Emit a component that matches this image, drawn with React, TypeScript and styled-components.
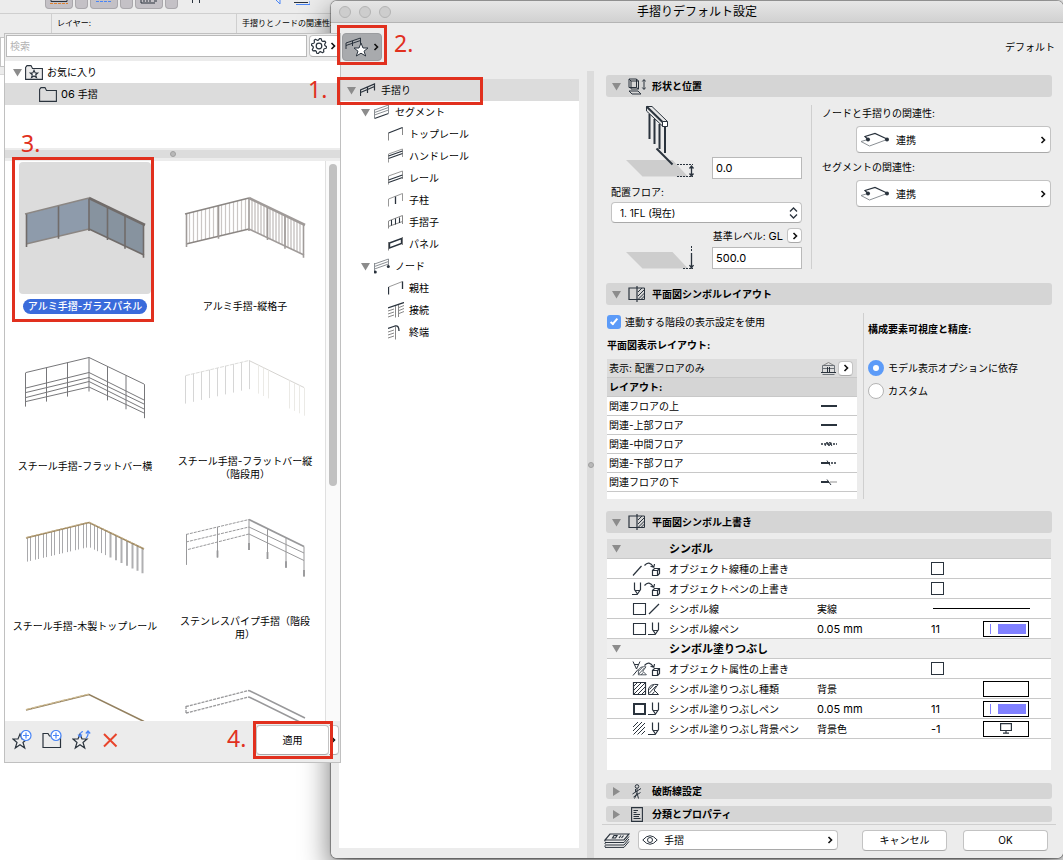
import React, { useState } from "react";
import styled, { createGlobalStyle } from "styled-components";

const INK = "#2a333d";
const RED = "#e1301e";
const BLUE = "#4a86f7";

const GlobalStyle = createGlobalStyle`
  *, *::before, *::after { box-sizing: border-box; }
  body {
    margin: 0;
    background: #fff;
    color: #000;
    font: 10px/14px Inter, "Noto Sans CJK JP", sans-serif;
  }
  button, input, select { font: inherit; color: inherit; margin: 0; padding: 0; }
  svg { display: block; flex: none; }
  h1, h2, h3, p, ul { margin: 0; padding: 0; font: inherit; }
  ul { list-style: none; }
`;

const Desktop = styled.main`
  position: relative;
  min-height: 100vh;
  overflow: hidden;
`;

/* ---------- main application window behind the dialog ---------- */

const AppBackdrop = styled.div`
  position: absolute;
  inset: 0 0 auto 0;
  background: #ececec;
`;

const AppToolbar = styled.div`
  display: flex;
  height: 14px;
  padding-left: 45px;
  border-bottom: 1px solid #cfcfcf;
`;

const ToolChip = styled.div<{ $wide?: boolean }>`
  display: flex;
  justify-content: center;
  width: ${(p) => (p.$wide ? 28 : 13)}px;
  height: 9px;
  margin-right: 2px;
  border: 1px solid #aaa8ac;
  border-top: 0;
  border-radius: 0 0 4px 4px;
  background: #c4c1c6;
`;

const LooseIcons = styled.div`
  display: flex;
  gap: 76px;
  padding-left: 12px;
`;

const InfoBar = styled.div`
  display: flex;
  height: 20px;
  font-size: 8px;
  line-height: 18px;
  white-space: nowrap;
`;

const InfoCell = styled.div<{ $width: number }>`
  width: ${(p) => p.$width}px;
  padding-left: 5px;
  border-right: 1px solid #cfcfcf;
`;

const InfoBody = styled.div`
  height: 41px;
  padding-top: 3px;
  border-bottom: 1px solid #d8d8d8;
`;

const InfoField = styled.div`
  height: 30px;
  border: 1px solid #c4c4c4;
  background: #fff;
`;

/* ---------- dialog ---------- */

const Dialog = styled.section`
  position: relative;
  display: flex;
  flex-direction: column;
  min-height: calc(100vh - 3px);
  margin: 1px 0 2px 331px;
  overflow: clip;
  border-radius: 6px;
  background: #ececec;
`;

const DialogShadow = styled.div`
  position: absolute;
  inset: 1px 0 2px 331px;
  border-radius: 6px;
  box-shadow: 0 12px 28px 2px rgba(0, 0, 0, 0.5), 0 0 1px 1px rgba(0, 0, 0, 0.35);
`;

const TitleBar = styled.header`
  display: grid;
  grid-template-columns: 1fr auto 1fr;
  align-items: center;
  height: 22px;
  padding: 0 8px;
  border-bottom: 1px solid #b4b4b4;
  background: linear-gradient(#e6e6e6, #d1d1d1);
`;

const Lights = styled.div`
  display: flex;
  gap: 8px;
`;

const Light = styled.span`
  width: 12px;
  height: 12px;
  border: 1px solid #b3b3b3;
  border-radius: 50%;
  background: #cdcdcd;
`;

const Title = styled.h1`
  font-size: 12px;
`;

const DialogTools = styled.div`
  display: flex;
  align-items: center;
  justify-content: space-between;
  height: 48px;
  padding: 0 8px 0 11px;
`;

const FavoriteButton = styled.button`
  display: flex;
  align-items: center;
  justify-content: center;
  gap: 3px;
  width: 40px;
  height: 28px;
  border: 1px solid #9b9da0;
  border-radius: 4px;
  background: #a8aaad;
`;

const DialogBody = styled.div`
  display: flex;
  flex: 1;
`;

const Tree = styled.ul`
  width: 240px;
  margin: 8px 8px 10px;
  background: #fff;
`;

const TreeRow = styled.li<{ $level: number; $selected?: boolean }>`
  display: flex;
  align-items: center;
  gap: 5px;
  height: 22px;
  padding-left: ${(p) => 8 + p.$level * 14}px;
  background: ${(p) => (p.$selected ? "#dcdcdc" : "transparent")};
`;

const TriSlot = styled.span`
  width: 8px;
`;

const Splitter = styled.div<{ $horizontal?: boolean }>`
  display: flex;
  align-items: center;
  justify-content: center;
  flex: none;
  background: #dcdcdc;
  ${(p) => (p.$horizontal ? "height: 8px; margin: 2px 0 3px;" : "width: 7px;")}
`;

const Grip = styled.span`
  flex: none;
  width: 6px;
  height: 6px;
  border: 1px solid #a0a0a0;
  border-radius: 50%;
  background: #b8b8b8;
`;

const Settings = styled.div`
  display: flex;
  flex: 1;
  flex-direction: column;
  min-width: 0;
`;

const Panels = styled.div`
  flex: 1;
  padding: 4px 11px 2px 12px;
`;

const PanelHead = styled.h2<{ $slim?: boolean }>`
  display: flex;
  align-items: center;
  height: ${(p) => (p.$slim ? 16 : 22)}px;
  padding-left: 6px;
  margin-bottom: ${(p) => (p.$slim ? 7 : 0)}px;
  border-radius: 3px;
  background: #d5d5d5;
  font-weight: 700;
  &:last-child { margin-bottom: 0; }
`;

const HeadIcon = styled.span`
  display: flex;
  justify-content: center;
  width: 20px;
  margin: 0 5px 0 6px;
`;

const PositionBody = styled.div`
  display: grid;
  grid-template-columns: 206px 1fr;
  padding: 8px 0 14px;
`;

const PositionLeft = styled.div`
  padding: 0 9px 0 5px;
  border-right: 1px solid #cfcfcf;
`;

const PictureRow = styled.div`
  display: flex;
  align-items: flex-end;
  justify-content: space-between;
  padding-left: 15px;
`;

const NumberInput = styled.input`
  width: 90px;
  height: 22px;
  padding: 0 3px;
  border: 1px solid #b9b9b9;
  background: #fff;
  font-size: 11px;
`;

const FloorLabel = styled.label`
  display: block;
  margin: 6px 0 3px;
`;

const SelectWrap = styled.div`
  display: grid;
  align-items: center;
  > * { grid-area: 1 / 1; }
  > svg { justify-self: end; margin-right: 4px; pointer-events: none; }
`;

const control = `
  border: 1px solid #c3c3c3;
  border-bottom-color: #a9a9a9;
  border-radius: 4px;
  background: #fff;
`;

const FloorSelect = styled.select`
  ${control}
  appearance: none;
  height: 21px;
  padding: 0 8px;
`;

const BaseRow = styled.div`
  display: flex;
  align-items: center;
  justify-content: flex-end;
  gap: 4px;
  height: 15px;
  margin: 5px 0 3px;
`;

const RoundButton = styled.button`
  ${control}
  display: flex;
  align-items: center;
  justify-content: center;
  width: 15px;
  height: 15px;
`;

const PositionRight = styled.div`
  padding: 1px 1px 0 10px;
`;

const LinkButton = styled.button`
  ${control}
  display: flex;
  align-items: center;
  gap: 7px;
  width: calc(100% - 34px);
  height: 27px;
  margin: 6px 0 7px 34px;
  padding: 0 4px 0 3px;
  text-align: left;
  > svg:last-child { margin-left: auto; }
`;

const LayoutBody = styled.div`
  display: grid;
  grid-template-columns: 258px 1fr;
  padding: 8px 0 12px;
`;

const LayoutLeft = styled.div`
  padding: 2px 6px 0 1px;
  border-right: 1px solid #cfcfcf;
`;

const LayoutRight = styled.div`
  padding: 9px 0 0 4px;
`;

const SubHead = styled.h3<{ $bottom: number }>`
  margin-bottom: ${(p) => p.$bottom}px;
  font-weight: 700;
`;

const CheckLabel = styled.label`
  display: flex;
  align-items: center;
  gap: 4px;
  margin-bottom: 9px;
`;

const BlueCheck = styled.input`
  appearance: none;
  width: 14px;
  height: 14px;
  border-radius: 3px;
  background: #5c9bf8;
  display: grid;
  place-items: center;
  &:checked::after {
    content: "";
    width: 4px;
    height: 8px;
    margin-bottom: 2px;
    border: solid #fff;
    border-width: 0 2px 2px 0;
    transform: rotate(40deg);
  }
`;

const RadioLabel = styled.label`
  display: flex;
  align-items: center;
  gap: 4px;
  margin-bottom: 7px;
`;

const Radio = styled.input`
  appearance: none;
  width: 16px;
  height: 16px;
  border: 1px solid #b4b4b4;
  border-radius: 50%;
  background: #fff;
  &:checked { border: 5px solid #5c9bf8; }
`;

const FloorTable = styled.table`
  width: 100%;
  height: 140px;
  border-spacing: 0;
  background: #fff;
  td, th {
    height: 19px;
    padding: 0 0 0 2px;
    border-bottom: 1px solid #c8c8c8;
    text-align: left;
    font-weight: inherit;
  }
  td:last-child { width: 36px; padding: 0; }
  tr:last-child td { height: 7px; border: 0; }
`;

const FloorHeadRow = styled.tr<{ $bold?: boolean }>`
  background: ${(p) => (p.$bold ? "#d5d5d5" : "#dcdcdc")};
  font-weight: ${(p) => (p.$bold ? 700 : 400)};
`;

const FloorTools = styled.div`
  display: flex;
  align-items: center;
  gap: 2px;
`;

const OverrideFrame = styled.div`
  min-height: 231px;
  margin: 6px 1px 13px;
  background: #fff;
`;

const OverrideTable = styled.table`
  width: 100%;
  table-layout: fixed;
  border-spacing: 0;
  td, th {
    height: 20px;
    padding: 0;
    border-bottom: 1px solid #c8c8c8;
    text-align: left;
    white-space: nowrap;
    font-weight: inherit;
  }
`;

const GroupRow = styled.tr<{ $light?: boolean }>`
  background: ${(p) => (p.$light ? "#f0f0f0" : "#dcdcdc")};
  font-size: 11px;
  font-weight: 700;
  td { padding-left: 5px; }
`;

const Figure = styled.span`
  font-size: 11px;
`;

const SquareCheck = styled.input`
  appearance: none;
  display: block;
  width: 13px;
  height: 13px;
  border: 1px solid ${INK};
  background: #fff;
`;

const Swatch = styled.button`
  display: flex;
  align-items: center;
  justify-content: center;
  width: 46px;
  height: 16px;
  border: 1px solid #000;
  background: #fff;
`;

const PenBars = styled.span`
  display: flex;
  justify-content: space-between;
  width: 100%;
  height: 10px;
  padding: 0 2px 0 6px;
  &::before { content: ""; width: 1px; background: #8080ff; }
  &::after { content: ""; width: 28px; background: #8080ff; }
`;

const DialogFoot = styled.footer`
  display: flex;
  align-items: center;
  height: 34px;
  margin: 0 7px 0 8px;
  padding: 0 8px 3px 2px;
  border-top: 1px solid #cfcfcf;
`;

const LayerButton = styled.button`
  ${control}
  display: flex;
  flex: 0 1 200px;
  align-items: center;
  gap: 6px;
  height: 20px;
  margin: 0 auto 0 8px;
  padding: 0 4px 0 3px;
  > svg:last-child { margin-left: auto; }
`;

const PushButton = styled.button`
  ${control}
  width: 85px;
  height: 21px;
  margin-left: 16px;
`;

/* ---------- favourites popover ---------- */

const Popover = styled.aside`
  position: absolute;
  top: 33px;
  left: 4px;
  display: flex;
  flex-direction: column;
  width: 337px;
  border: 1px solid #c0c0c0;
  background: #ececec;
`;

const SearchRow = styled.div`
  display: flex;
  gap: 2px;
  padding: 1px 1px 4px 1px;
`;

const SearchInput = styled.input`
  flex: 1;
  min-width: 0;
  height: 22px;
  padding: 0 3px;
  border: 1px solid #b9b9b9;
  background: #fff;
  &::placeholder { color: #b4b4b4; opacity: 1; }
`;

const GearButton = styled.button`
  ${control}
  display: flex;
  align-items: center;
  gap: 3px;
  width: 30px;
  height: 22px;
  padding-left: 1px;
  border-right: 0;
  border-radius: 4px 0 0 4px;
`;

const FolderList = styled.ul`
  height: 87px;
  background: #fff;
`;

const FolderRow = styled.li<{ $nested?: boolean }>`
  display: flex;
  align-items: center;
  gap: 3px;
  height: 22px;
  padding-left: ${(p) => (p.$nested ? 34 : 8)}px;
  background: ${(p) => (p.$nested ? "#dcdcdc" : "transparent")};
`;

const FolderName = styled.span`
  margin-left: 1px;
`;

const Browser = styled.div`
  display: flex;
  height: 560px;
  overflow: hidden;
  background: #fff;
`;

const Gallery = styled.div`
  display: grid;
  flex: 1;
  grid-template-columns: repeat(2, 160px);
  grid-auto-rows: 160px;
  padding-top: 1px;
`;

const Card = styled.figure`
  display: flex;
  flex-direction: column;
  align-items: center;
  margin: 0;
  padding-bottom: 3px;
`;

const Thumb = styled.div<{ $selected?: boolean }>`
  width: 132px;
  height: 132px;
  border-radius: 4px;
  background: ${(p) => (p.$selected ? "#dcdcdc" : "transparent")};
`;

const Caption = styled.figcaption<{ $selected?: boolean }>`
  margin: auto 0;
  padding: 1px 5px;
  border-radius: 8px;
  background: ${(p) => (p.$selected ? "#3a6bdb" : "transparent")};
  color: ${(p) => (p.$selected ? "#fff" : "#000")};
  font-weight: ${(p) => (p.$selected ? 500 : 400)};
  line-height: 13px;
  text-align: center;
  white-space: nowrap;
`;

const ScrollTrack = styled.div`
  width: 15px;
  padding: 3px 2px 0 3px;
  border-left: 1px solid #e0e0e0;
  background: #fafafa;
`;

const ScrollThumb = styled.div`
  width: 8px;
  height: 322px;
  border-radius: 4px;
  background: #c1c1c1;
`;

const PopoverFoot = styled.div`
  display: flex;
  align-items: center;
  gap: 10px;
  height: 41px;
  padding: 0 1px 3px 7px;
`;

const IconButton = styled.button`
  display: flex;
  border: 0;
  background: none;
`;

const ApplyGroup = styled.div`
  display: flex;
  margin-left: auto;
`;

const ApplyButton = styled.button`
  ${control}
  width: 73px;
  height: 30px;
`;

const ApplyMenu = styled.button`
  ${control}
  display: flex;
  align-items: center;
  justify-content: flex-end;
  width: 10px;
  height: 30px;
  padding-right: 2px;
  border-left: 0;
  border-radius: 0 4px 4px 0;
`;

/* ---------- tutorial marks ---------- */

const Mark = styled.div<{ $x: number; $y: number; $w: number; $h: number }>`
  position: absolute;
  left: ${(p) => p.$x}px;
  top: ${(p) => p.$y}px;
  width: ${(p) => p.$w}px;
  height: ${(p) => p.$h}px;
  border: 3px solid ${RED};
  pointer-events: none;
`;

const Step = styled.div<{ $x: number; $y: number }>`
  position: absolute;
  left: ${(p) => p.$x}px;
  top: ${(p) => p.$y}px;
  color: ${RED};
  font: 23px/24px "Noto Sans", sans-serif;
`;

/* ---------- icons ---------- */

type LineProps = { w: number; h: number; children: React.ReactNode; color?: string; sw?: number };

const Ico = ({ w, h, children, color = INK, sw = 1 }: LineProps) => (
  <svg width={w} height={h} viewBox={`0 0 ${w} ${h}`} fill="none" stroke={color} strokeWidth={sw} aria-hidden="true">
    {children}
  </svg>
);

const Triangle = ({ closed }: { closed?: boolean }) => (
  <svg width="9" height="9" viewBox="0 0 9 9" fill="#8c8c8c" aria-hidden="true">
    <path d={closed ? "M1 0L8 4.500L1 9Z" : "M0 1H9L4.500 8.500Z"} />
  </svg>
);

const Chevron = () => (
  <Ico w={6} h={8} sw={1.6} color="#111"><path d="M1.500 1L4.500 4L1.500 7" /></Ico>
);

const Gear = () => {
  const pts: string[] = [];
  for (let i = 0; i < 32; i++) {
    const r = i % 4 < 2 ? 7.6 : 5.9;
    const a = ((i + 0.5) / 32) * Math.PI * 2;
    pts.push(`${(8 + r * Math.cos(a)).toFixed(2)},${(8 + r * Math.sin(a)).toFixed(2)}`);
  }
  return (
    <Ico w={16} h={16} sw={1.2}>
      <polygon points={pts.join(" ")} strokeLinejoin="round" />
      <circle cx="8" cy="8" r="2.800" />
    </Ico>
  );
};

const FolderIcon = ({ star }: { star?: boolean }) => (
  <Ico w={18} h={15} sw={1.1}>
    <path d="M.6 14.400V2.500L2 .6H6L7.500 3.500H17.400V14.400Z" fill={star ? "#ececec" : "none"} />
    {star && <path d="M9 5.300L10.200 8H12.700L10.700 9.800L11.500 12.500L9 11L6.500 12.500L7.300 9.800L5.300 8H7.800Z" fill="#fff" />}
  </Ico>
);

const treeIcons: Record<string, React.ReactNode> = {
  railing: <path d="M.5 14V8L14.500 2V8.500M.5 10.500L14.500 4.500M7.500 5V11" strokeWidth="1.200" />,
  segment: (
    <>
      <path d="M.5 6L14.500 1M.5 8.500L14.500 3.500M.5 11L14.500 6M.5 5.500V14M14.500 .5V9" stroke="#8a8f94" />
      <path d="M.5 14.500L14.500 9.500" strokeWidth="1.200" />
    </>
  ),
  top: (<><path d="M.5 14.500V7M14.500 1.500V9" stroke="#888" /><path d="M.5 7L14.500 1.500" strokeWidth="1.300" /></>),
  hand: (<><path d="M.5 14.500V6L14.500 1V9" stroke="#999" /><path d="M.5 8L14.500 3M.5 10.500L14.500 5.500" strokeWidth="1.200" /></>),
  rail: (<><path d="M.5 14.500V6L14.500 1V9" stroke="#999" /><path d="M.5 10L14.500 5M.5 12.500L14.500 7.500" strokeWidth="1.200" /></>),
  post: (<><path d="M.5 14.500V7L14.500 1.500V9" stroke="#999" /><path d="M7.500 4.500V12" strokeWidth="1.300" /></>),
  baluster: (<><path d="M.5 14.500V7L14.500 1.500V10M.5 12.500L14.500 7.500" stroke="#888" /><path d="M3.500 6V11.500M7.500 4.500V10.500M11.500 3.500V9" strokeWidth="1.100" /></>),
  panel: (<><path d="M.5 14.500V6M14.500 1V9" stroke="#888" /><path d="M1.500 7L13.500 2.500V7.500L1.500 12Z" strokeWidth="1.400" /></>),
  node: (
    <>
      <path d="M.5 6L14.500 1M.5 8.500L14.500 3.500M.5 11L14.500 6M.5 5V14M14.500 1V9" stroke="#8a8f94" />
      <circle cx="1.300" cy="14" r="1.500" fill={INK} stroke="none" />
      <circle cx="14.300" cy="8.500" r="1.500" fill={INK} stroke="none" />
    </>
  ),
  newel: (<><path d="M.5 7L14.500 1.500" stroke="#999" /><path d="M.5 14.500V7M14.500 1.500V9" strokeWidth="1.300" /></>),
  joint: (
    <>
      <path d="M0 6L16 .5" strokeWidth="1.300" />
      <path d="M0 9L6 7M0 12L6 10M0 15L6 13M11 5.500L16 3.500M11 8.500L16 6.500M11 11.500L16 9.500M7.500 4V15.500M10.500 3V15" stroke="#888" />
    </>
  ),
  end: (
    <>
      <path d="M0 4.500L7 2Q11 1 11 7" strokeWidth="1.300" />
      <path d="M0 8L6 6M0 11L6 9M0 14L6 12M7.500 3V15.500" stroke="#888" />
    </>
  ),
};

const RailingStar = () => (
  <Ico w={25} h={20}>
    <path d="M1 12V6L15.500 1V7M1 8.500L15.500 3.500M7.500 4V9" />
    <path d="M16 6L18 11H23L19 14.200L20.700 19L16 16.200L11.300 19L13 14.200L9 11H14Z" fill="#fff" />
  </Ico>
);

const PositionIcon = () => (
  <Ico w={18} h={17}>
    <path d="M1 1H8.500V9.500H1ZM1 1L3 3V11H10.500V3L8.500 1M8.500 9.500L10.500 11M3 3H10.500M1 13H10L13 16H4Z" />
    <path d="M16 2V11M14.300 3.500L16 1.500L17.700 3.500M14.300 9.500L16 11.500L17.700 9.500" />
  </Ico>
);

const PlanIcon = () => (
  <Ico w={18} h={16} sw={1.200}>
    <path d="M8.500 2H1V13.500H8.500M9 0V16" />
    <path d="M9 2H16.500V13.500H9M10 6L14 2M10 10L16.500 3.500M10 13.500L16.500 7M13 13.500L16.500 10" strokeWidth="1" />
  </Ico>
);

const BreakIcon = () => (
  <Ico w={10} h={15}>
    <circle cx="5" cy="2.500" r="1.800" />
    <path d="M5 4.500V9L2.500 14.500M5 9L6.500 14.500M.5 10L9 4.500M1.500 13L8.500 8.500M3.500 5V8" />
  </Ico>
);

const DocIcon = () => (
  <Ico w={12} h={15} sw={1.100}>
    <path d="M.6 .6H11.400V14.400H.6ZM2.500 3.500H7M2.500 5.500H5.500M2.500 7.500H9M2.500 9.500H8M2.500 11.500H9.500" />
  </Ico>
);

const LinkIcon = () => (
  <Ico w={29} h={15}>
    <path d="M8 7.500L5 4.500L15 1.500L27 7" strokeWidth="1.200" />
    <path d="M8 7.500L1 9.500L9.500 14L27 7.500" stroke="#8a8f94" />
    <circle cx="8" cy="7.500" r="2" fill={INK} stroke="none" />
    <circle cx="27" cy="7.500" r="2" fill={INK} stroke="none" />
  </Ico>
);

const HeightPicture = () => (
  <Ico w={70} h={74}>
    <path d="M0 55H46.500L62 71.500H16.500Z" fill="#cdcdcd" stroke="none" />
    <path d="M51 59.500H67M51 71.500H67" strokeDasharray="2 1" />
    <path d="M65.500 61V71M63.500 63.500L65.500 61L67.500 63.500M63.500 68.500L65.500 71L67.500 68.500" strokeWidth="1.300" />
    <path d="M23.500 9V34M28.500 14V39M33.500 19V44M39 21V48" strokeWidth="2" />
    <path d="M30.500 43.500L46.500 59.500" strokeWidth="2" />
    <path d="M20.500 1.500H26L41 16V21H36.500L20.500 6Z" fill="#e8e8e8" />
    <path d="M20.500 1.500L36.500 17" strokeWidth="2" />
    <path d="M36.500 16.500H41.500V21.500H36.500Z" fill="#fff" />
  </Ico>
);

const LevelPicture = () => (
  <Ico w={70} h={23}>
    <path d="M0 6H46.500L62 22.500H16.500Z" fill="#cdcdcd" stroke="none" />
    <path d="M57 22.500H67" strokeDasharray="2 1" />
    <path d="M65.500 0V6" strokeDasharray="2 1" />
    <path d="M65.500 7V22M63.500 19L65.500 22L67.500 19" strokeWidth="1.300" />
  </Ico>
);

const StoryIcon = () => (
  <Ico w={15} h={15}>
    <path d="M2 4.500L7.500 1.500L13 4.500" stroke="#888" />
    <path d="M1.500 4.500H13.500V11M1.500 4.500V11M1.500 7.500H13.500M1.500 13.500H13.500" stroke="#6d7379" />
    <path d="M0 11.500H15M6.500 6V11M8.500 6V11" />
  </Ico>
);

const StackIcon = () => (
  <Ico w={26} h={15}>
    <path d="M6 1H25L20 7H1ZM8.500 5L10 2.500H13L11.500 5ZM15 5L17 2.500M17.500 5L19.500 2.500" strokeWidth="1.200" />
    <path d="M1 9.500H20L25 3.500M1 12H20L25 6M1 14.400H20L25 8.500M1 7V8.500M1 10V11M1 12.500V14" />
  </Ico>
);

const EyeIcon = () => (
  <Ico w={16} h={10}>
    <path d="M.8 5Q8 -3.500 15.200 5Q8 13.500 .8 5Z" />
    <circle cx="8" cy="5" r="2.500" />
  </Ico>
);

const lineMarks: React.ReactNode[] = [
  <path key="0" d="M0 4H16" strokeWidth="2" />,
  <path key="1" d="M0 4H16" strokeWidth="2" />,
  <g key="2"><path d="M0 4H16" strokeWidth="1.500" strokeDasharray="2 1" /><path d="M4 6L6 2L8 6L10 2M8 2L11 6" /></g>,
  <g key="3"><path d="M0 4H9" strokeWidth="2" /><path d="M10 4H16" strokeWidth="1.500" strokeDasharray="2 1" /><path d="M6 1.500L9 6.500" /></g>,
  <g key="4"><path d="M9 4H16" stroke="#c8c8c8" strokeWidth="2" /><path d="M0 4H8" strokeWidth="2" /><path d="M6 1.500L10 7" /></g>,
];

const ObjectArrow = () => (
  <>
    <path d="M12.500 4.500Q17 -1 21.500 6M18.500 5.200L21.800 6.300L22.500 3" strokeWidth="1.200" />
    <path d="M20.500 9.500H25.500V14.500H20.500ZM20.500 9.500L22.500 7.500H27.500V12.500L25.500 14.500M27.500 7.500L25.500 9.500" strokeWidth="1.200" />
  </>
);

const Pen = ({ x }: { x: number }) => (
  <g transform={`translate(${x} 0)`}>
    <path d="M2.500 1.500V8.500L5.500 13L8.500 8.500V1.500M3.500 9.500H7.500" strokeWidth="1.200" />
    <path d="M-2 13.500H5.500" />
  </g>
);

const Hatch = () => <path d="M1 6L6 1M1 10L10 1M1.500 13.500L13 2M5.500 13.500L13 6M9.500 13.500L13 10" />;
const FillSector = ({ x }: { x: number }) => (
  <path transform={`translate(${x} 0)`} d="M.5 13.500V8Q2 2.500 10 3.500L6 9L10.500 13.500ZM1.500 8.500L5.500 4M1 12.500L8 5M4 13.500L6.500 10.500" />
);

const rowIcons: Record<string, React.ReactNode> = {
  objLine: (<><path d="M1 14.500L9.500 5" strokeWidth="1.200" /><ObjectArrow /></>),
  objPen: (<><Pen x={0} /><ObjectArrow /></>),
  line: (<><path d="M1.500 2.500H13.500V13.500H1.500Z" strokeWidth="1.100" /><path d="M17 13L27 3" strokeWidth="1.200" /></>),
  linePen: (<><path d="M1.500 2.500H13.500V13.500H1.500Z" strokeWidth="1.100" /><Pen x={18} /></>),
  objFill: (<><path d="M1 .5L4.500 8L8 .5M2.500 3.500H6.500M1 14.500L6 8.500" /><g transform="translate(6 3) scale(.8)"><FillSector x={0} /></g><ObjectArrow /></>),
  fill: (<><path d="M1.500 1.500H13.500V13.500H1.500Z" strokeWidth="1.200" /><Hatch /><FillSector x={16} /></>),
  fillPen: (<><path d="M2 3H13V13H2Z" strokeWidth="2" /><Pen x={18} /></>),
  backPen: (<><Hatch /><Pen x={18} /></>),
};

const MonitorIcon = () => (
  <Ico w={12} h={11} sw={1.200}><path d="M.6 .6H11.400V7.500H.6ZM6 7.500V10M3 10.200H9" /></Ico>
);

const badge = (
  <g stroke={BLUE}>
    <circle cx="14" cy="5.500" r="5" fill="#fff" />
    <path d="M14 2.500V8.500M11 5.500H17" />
  </g>
);

const FOOT_STAR = "M8 4L10 9H15L11 12.500L12.700 18L8 14.700L3.300 18L5 12.500L1 9H6Z";

/* ---------- railing thumbnails ---------- */

/* height of a line that runs from the left end to the corner and on to the right end */
const at = (x: number, l: number, c: number, r: number) =>
  x <= 70 ? l + ((c - l) * (x - 7)) / 63 : c + ((r - c) * (x - 70)) / 55;

const bend = (l: number, c: number, r: number) => `M7 ${l}L70 ${c}L125 ${r}`;
const posts = (xs: number[], t: number[], b: number[]) =>
  xs.map((x) => `M${x} ${at(x, t[0], t[1], t[2]).toFixed(1)}V${at(x, b[0], b[1], b[2]).toFixed(1)}`).join("");
const span = (from: number, to: number, step: number) => {
  const out: number[] = [];
  for (let x = from; x <= to; x += step) out.push(x);
  return out;
};

const MAIN = [7.5, 39.5, 70, 88.5, 106, 124.5];

const frame = (
  <>
    <path d="M7 82L70 67" stroke="#8b8683" strokeWidth="1.300" />
    <path d="M70 67L125 93" strokeWidth="1.600" />
    <path d={posts(MAIN, [52, 36, 63], [85, 69, 96])} strokeWidth="1.600" />
    <path d="M6 52L70 36" stroke="#8b8683" strokeWidth="1.600" />
    <path d="M70 36L126 63" strokeWidth="2.500" />
  </>
);

const thumbs: React.ReactNode[] = [
  <g key="glass" stroke="#716c6a">
    <path d="M7 52L70 36V67L7 82Z" fill="#8e9bab" stroke="none" />
    <path d="M70 36L125 63V93L70 67Z" fill="#87939f" stroke="none" />
    {frame}
  </g>,
  <g key="bars" stroke="#a09b99">
    <path d={posts(span(10.5, 68, 4), [52, 36, 63], [82, 67, 93])} stroke="#cbc7c5" strokeWidth="1.200" />
    <path d={posts(span(73, 123, 3), [52, 36, 63], [82, 67, 93])} stroke="#cbc8c6" strokeWidth="1.500" />
    {frame}
  </g>,
  <g key="flat" stroke="#77777a">
    <path d={[bend(50.5, 35.5, 62), bend(66, 50.5, 78), bend(70.5, 55.5, 82), bend(75.5, 59.5, 87), bend(79.5, 65, 91)].join("")} />
    <path d={posts([6.5, 27.5, 48.5, 70, 88.5, 107, 125.5], [50.5, 35.5, 62], [84.5, 69.5, 96])} />
  </g>,
  <g key="stair" stroke="#dcdcda">
    <path d="M7 53.500L70 38.500" strokeDasharray="4 1" />
    <path d="M70 38.500L125 65.500" stroke="#d6d4d1" />
    <path d={posts([6.5, 14.5, 22.5, 30.5, 38.5, 46.5, 54.5, 62.5, 70.5], [53.5, 38.5, 65.5], [81.5, 67, 93.5])} stroke="#d6d6d6" />
    <path d={posts([79.5, 84.5, 89.5, 110.5, 115.5, 120.5, 125.5], [53.5, 38.5, 65.5], [81.5, 67, 93.5])} stroke="#ebeae6" />
  </g>,
  <g key="wood" stroke="#a9a9ac">
    <path d={posts([8.5, 11.5, 16.5, 19.5, 24.5, 27.5, 32.5, 35.5, 40.5, 43.5, 48.5, 51.5, 56.5, 59.5, 64.5, 67.5, 71.5, 75.5, 78.5, 82.5, 86.5], [56, 40.5, 67], [80, 65, 92])} />
    <path d={posts([91.5, 97, 102.5, 108, 113.5, 118.5, 123.5], [56, 40.5, 67], [80, 65, 92])} stroke="#b0b0b2" strokeWidth="2" />
    <path d={bend(56, 40.5, 67)} stroke="#9c8660" strokeWidth="1.500" />
    <path d={bend(55.5, 40, 66.5)} stroke="#c9b58d" strokeDasharray="3 2" />
  </g>,
  <g key="pipe" stroke="#98989a">
    <path d="M7 52.500L70 37.500M7 60L70 45M9 67.500L70 52" strokeDasharray="3 1" />
    <path d="M70 45L125 71M70 52L125 78.500" />
    <path d="M70 37.500L125 64.500" strokeWidth="1.800" />
    <path d={posts([7.5, 38.5, 70, 88.5, 107, 125], [52.5, 37.5, 64.5], [83, 68, 94.5])} />
    <path d={posts([38.5, 70, 88.5, 107, 125], [76, 61, 88], [83, 68, 94.5])} strokeWidth="1.800" />
  </g>,
  <g key="woodRail">
    <path d={bend(68, 52.5, 79.5)} stroke="#93805f" strokeWidth="1.600" />
    <path d="M7 67.500L70 52" stroke="#d0bd94" strokeWidth="1.200" strokeDasharray="5 1" />
  </g>,
  <g key="doubleRail" stroke="#98989a">
    <path d="M7 64.500L70 48.500M7 71L70 55M7 64V72" strokeDasharray="3 1" strokeWidth="1.300" />
    <path d="M70 48.500L126 76M70 55L126 82.500" strokeWidth="1.600" />
  </g>,
];

/* ---------- data ---------- */

const favorites: string[][] = [
  ["アルミ手摺-ガラスパネル"],
  ["アルミ手摺-縦格子"],
  ["スチール手摺-フラットバー横"],
  ["スチール手摺-フラットバー縦", "（階段用）"],
  ["スチール手摺-木製トップレール"],
  ["ステンレスパイプ手摺（階段", "用）"],
  [],
  [],
];

const tree: { level: number; icon: string; label: string }[] = [
  { level: 0, icon: "railing", label: "手摺り" },
  { level: 1, icon: "segment", label: "セグメント" },
  { level: 2, icon: "top", label: "トップレール" },
  { level: 2, icon: "hand", label: "ハンドレール" },
  { level: 2, icon: "rail", label: "レール" },
  { level: 2, icon: "post", label: "子柱" },
  { level: 2, icon: "baluster", label: "手摺子" },
  { level: 2, icon: "panel", label: "パネル" },
  { level: 1, icon: "node", label: "ノード" },
  { level: 2, icon: "newel", label: "親柱" },
  { level: 2, icon: "joint", label: "接続" },
  { level: 2, icon: "end", label: "終端" },
];

const floors = ["関連フロアの上", "関連-上部フロア", "関連-中間フロア", "関連-下部フロア", "関連フロアの下"];

type Override = { icon: string; label: string; value?: string; num?: string; kind: "check" | "line" | "pen" | "blank" | "screen" };

const symbolRows: Override[] = [
  { icon: "objLine", label: "オブジェクト線種の上書き", kind: "check" },
  { icon: "objPen", label: "オブジェクトペンの上書き", kind: "check" },
  { icon: "line", label: "シンボル線", value: "実線", kind: "line" },
  { icon: "linePen", label: "シンボル線ペン", value: "0.05 mm", num: "11", kind: "pen" },
];

const fillRows: Override[] = [
  { icon: "objFill", label: "オブジェクト属性の上書き", kind: "check" },
  { icon: "fill", label: "シンボル塗りつぶし種類", value: "背景", kind: "blank" },
  { icon: "fillPen", label: "シンボル塗りつぶしペン", value: "0.05 mm", num: "11", kind: "pen" },
  { icon: "backPen", label: "シンボル塗りつぶし背景ペン", value: "背景色", num: "-1", kind: "screen" },
];

/* ---------- parts ---------- */

const OverrideRow = ({ row }: { row: Override }) => (
  <tr>
    <td />
    <td><Ico w={30} h={16}>{rowIcons[row.icon]}</Ico></td>
    <td>{row.label}</td>
    <td>{row.value && /^\d/.test(row.value) ? <Figure>{row.value}</Figure> : row.value}</td>
    {row.kind === "line" ? (
      <td colSpan={2}><Ico w={99} h={2} color="#000"><path d="M2 .5H99" /></Ico></td>
    ) : (
      <>
        <td>{row.kind === "check" ? <SquareCheck type="checkbox" aria-label={row.label} /> : <Figure>{row.num}</Figure>}</td>
        <td>
          {row.kind !== "check" && (
            <Swatch aria-label={row.label}>
              {row.kind === "pen" && <PenBars />}
              {row.kind === "screen" && <MonitorIcon />}
            </Swatch>
          )}
        </td>
      </>
    )}
  </tr>
);

const SectionHead = ({ icon, title, closed }: { icon: React.ReactNode; title: string; closed?: boolean }) => (
  <PanelHead $slim={closed}>
    <Triangle closed={closed} />
    <HeadIcon>{icon}</HeadIcon>
    {title}
  </PanelHead>
);

const FavoritesPopover = () => (
  <Popover>
    <SearchRow>
      <SearchInput type="text" placeholder="検索" aria-label="検索" />
      <GearButton aria-label="設定"><Gear /><Chevron /></GearButton>
    </SearchRow>
    <FolderList>
      <FolderRow><Triangle /><FolderIcon star /><FolderName>お気に入り</FolderName></FolderRow>
      <FolderRow $nested><FolderIcon /><FolderName><Figure>06 </Figure>手摺</FolderName></FolderRow>
    </FolderList>
    <Splitter $horizontal><Grip /></Splitter>
    <Browser>
      <Gallery>
        {favorites.map((lines, i) => (
          <Card key={i}>
            <Thumb $selected={i === 0}>
              <svg width="132" height="132" viewBox="0 0 132 132" fill="none" aria-hidden="true">{thumbs[i]}</svg>
            </Thumb>
            {lines.length > 0 && (
              <Caption $selected={i === 0}>
                {lines.map((t) => <div key={t}>{t}</div>)}
              </Caption>
            )}
          </Card>
        ))}
      </Gallery>
      <ScrollTrack><ScrollThumb /></ScrollTrack>
    </Browser>
    <PopoverFoot>
      <IconButton aria-label="新規お気に入り">
        <Ico w={20} h={20} sw={1.200}><path d={FOOT_STAR} />{badge}</Ico>
      </IconButton>
      <IconButton aria-label="新規フォルダ">
        <Ico w={20} h={20} sw={1.200}><path d="M1 17.500V3.500H6L7.500 6H18.500V17.500Z" />{badge}</Ico>
      </IconButton>
      <IconButton aria-label="再定義">
        <Ico w={20} h={20} sw={1.200}>
          <path d={FOOT_STAR} />
          <path d="M11 1.500Q8 2 8 6.500M6 4.500L8 7L10 4.500M14 8Q16.500 6 16 1.500M13.800 3.500L16 1L18.200 3.500" stroke={BLUE} />
        </Ico>
      </IconButton>
      <IconButton aria-label="削除">
        <Ico w={16} h={16} sw={2} color="#e8452c"><path d="M2 2L14.500 14.500M14.500 2L2 14.500" /></Ico>
      </IconButton>
      <ApplyGroup>
        <ApplyButton>適用</ApplyButton>
        <ApplyMenu aria-label="適用オプション"><Chevron /></ApplyMenu>
      </ApplyGroup>
    </PopoverFoot>
  </Popover>
);

const PositionPanel = () => (
  <PositionBody>
    <PositionLeft>
      <PictureRow><HeightPicture /><NumberInput defaultValue="0.0" aria-label="オフセット" /></PictureRow>
      <FloorLabel htmlFor="floor">配置フロア:</FloorLabel>
      <SelectWrap>
        <FloorSelect id="floor"><option>1. 1FL (現在)</option></FloorSelect>
        <Ico w={9} h={12} sw={1.300}><path d="M1 4.500L4.500 1L8 4.500M1 7.500L4.500 11L8 7.500" /></Ico>
      </SelectWrap>
      <BaseRow>
        <label htmlFor="level">基準レベル: <Figure>GL</Figure></label>
        <RoundButton aria-label="基準レベル"><Chevron /></RoundButton>
      </BaseRow>
      <PictureRow><LevelPicture /><NumberInput id="level" defaultValue="500.0" /></PictureRow>
    </PositionLeft>
    <PositionRight>
      <p id="nodeLink">ノードと手摺りの関連性:</p>
      <LinkButton aria-describedby="nodeLink"><LinkIcon />連携<Chevron /></LinkButton>
      <p id="segmentLink">セグメントの関連性:</p>
      <LinkButton aria-describedby="segmentLink"><LinkIcon />連携<Chevron /></LinkButton>
    </PositionRight>
  </PositionBody>
);

const LayoutPanel = () => {
  const [linked, setLinked] = useState(true);
  return (
    <LayoutBody>
      <LayoutLeft>
        <CheckLabel>
          <BlueCheck type="checkbox" checked={linked} onChange={(e) => setLinked(e.target.checked)} />
          連動する階段の表示設定を使用
        </CheckLabel>
        <SubHead $bottom={7}>平面図表示レイアウト:</SubHead>
        <FloorTable>
          <tbody>
            <FloorHeadRow>
              <td>表示: 配置フロアのみ</td>
              <td><FloorTools><StoryIcon /><RoundButton aria-label="表示フロア"><Chevron /></RoundButton></FloorTools></td>
            </FloorHeadRow>
            <FloorHeadRow $bold><th colSpan={2}>レイアウト:</th></FloorHeadRow>
            {floors.map((f, i) => (
              <tr key={f}><td>{f}</td><td><Ico w={16} h={8}>{lineMarks[i]}</Ico></td></tr>
            ))}
            <tr><td colSpan={2} /></tr>
          </tbody>
        </FloorTable>
      </LayoutLeft>
      <LayoutRight>
        <SubHead $bottom={24}>構成要素可視度と精度:</SubHead>
        <RadioLabel><Radio type="radio" name="detail" defaultChecked />モデル表示オプションに依存</RadioLabel>
        <RadioLabel><Radio type="radio" name="detail" />カスタム</RadioLabel>
      </LayoutRight>
    </LayoutBody>
  );
};

const OverridePanel = () => (
  <OverrideFrame>
    <OverrideTable>
      <colgroup>
        <col width="25" /><col width="37" /><col width="148" /><col width="114" /><col width="52" /><col />
      </colgroup>
      <tbody>
        <GroupRow><td><Triangle /></td><td /><th colSpan={4}>シンボル</th></GroupRow>
        {symbolRows.map((r) => <OverrideRow key={r.icon} row={r} />)}
        <GroupRow $light><td><Triangle /></td><td /><th colSpan={4}>シンボル塗りつぶし</th></GroupRow>
        {fillRows.map((r) => <OverrideRow key={r.icon} row={r} />)}
      </tbody>
    </OverrideTable>
  </OverrideFrame>
);

export default function App() {
  return (
    <Desktop>
      <GlobalStyle />
      <AppBackdrop>
        <AppToolbar>
          <ToolChip $wide><Ico w={18} h={5}><path d="M1 0V1.500H17V0" /><path d="M0 3.500H18" stroke="#e0812f" strokeDasharray="3 1" /></Ico></ToolChip>
          <ToolChip />
          <ToolChip $wide><Ico w={18} h={5}><path d="M1 1.500H17" stroke={BLUE} strokeDasharray="3 1" /></Ico></ToolChip>
          <ToolChip />
          <ToolChip $wide><Ico w={18} h={5}><path d="M1 0V3H15M4 0V2M7 0V2M10 0V2M14 1H17" /></Ico></ToolChip>
          <ToolChip />
          <LooseIcons>
            <Ico w={8} h={4}><path d="M.5 0V3M7.500 0V3" /></Ico>
            <Ico w={34} h={5}>
              <path d="M0 0L4 4V0" stroke={BLUE} />
              <path d="M18 2.500H32" />
              <path d="M20 4.500H34V1" stroke={BLUE} />
            </Ico>
          </LooseIcons>
        </AppToolbar>
        <InfoBar>
          <InfoCell $width={52} />
          <InfoCell $width={185}>レイヤー:</InfoCell>
          <InfoCell $width={200}>手摺りとノードの関連性:</InfoCell>
        </InfoBar>
        <InfoBody><InfoField /></InfoBody>
      </AppBackdrop>
      <DialogShadow />
      <Dialog>
        <TitleBar>
          <Lights><Light /><Light /><Light /></Lights>
          <Title>手摺りデフォルト設定</Title>
        </TitleBar>
        <DialogTools>
          <FavoriteButton aria-label="お気に入り"><RailingStar /><Chevron /></FavoriteButton>
          <span>デフォルト</span>
        </DialogTools>
        <DialogBody>
          <Tree>
            {tree.map((n) => (
              <TreeRow key={n.label} $level={n.level} $selected={n.level === 0}>
                <TriSlot>{n.level < 2 && <Triangle />}</TriSlot>
                <Ico w={16} h={16}>{treeIcons[n.icon]}</Ico>
                {n.label}
              </TreeRow>
            ))}
          </Tree>
          <Splitter><Grip /></Splitter>
          <Settings>
            <Panels>
              <SectionHead icon={<PositionIcon />} title="形状と位置" />
              <PositionPanel />
              <SectionHead icon={<PlanIcon />} title="平面図シンボルレイアウト" />
              <LayoutPanel />
              <SectionHead icon={<PlanIcon />} title="平面図シンボル上書き" />
              <OverridePanel />
              <SectionHead closed icon={<BreakIcon />} title="破断線設定" />
              <SectionHead closed icon={<DocIcon />} title="分類とプロパティ" />
            </Panels>
            <DialogFoot>
              <StackIcon />
              <LayerButton><EyeIcon />手摺<Chevron /></LayerButton>
              <PushButton>キャンセル</PushButton>
              <PushButton>OK</PushButton>
            </DialogFoot>
          </Settings>
        </DialogBody>
      </Dialog>
      <FavoritesPopover />
      <Mark $x={337} $y={77} $w={146} $h={28} />
      <Mark $x={337} $y={25} $w={50} $h={40} />
      <Mark $x={12} $y={157} $w={142} $h={165} />
      <Mark $x={253} $y={721} $w={80} $h={38} />
      <Step $x={308} $y={77}>1.</Step>
      <Step $x={394} $y={31}>2.</Step>
      <Step $x={21} $y={131}>3.</Step>
      <Step $x={227} $y={726}>4.</Step>
    </Desktop>
  );
}
